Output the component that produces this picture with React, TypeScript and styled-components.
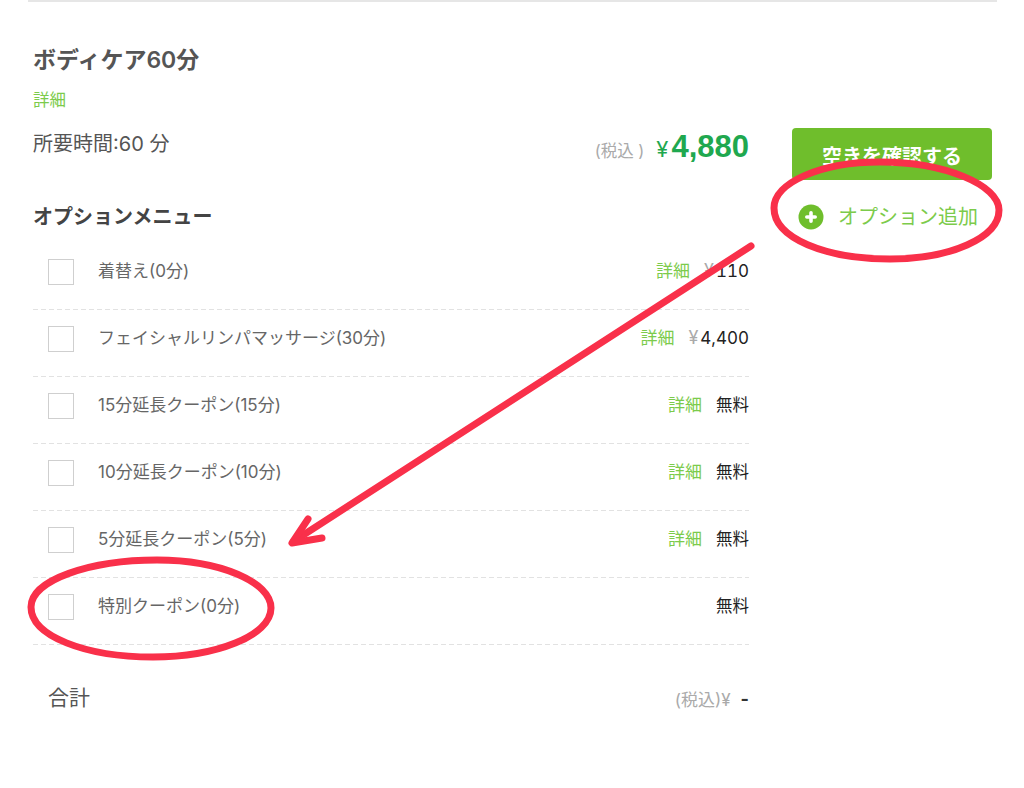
import React from "react";
import styled, { createGlobalStyle } from "styled-components";

const GlobalStyle = createGlobalStyle`
  html, body {
    margin: 0;
    padding: 0;
    background: #fff;
    font-family: "Inter", "Noto Sans CJK JP", sans-serif;
  }
`;

const Page = styled.div`
  position: relative;
  width: 1024px;
  height: 788px;
  overflow: hidden;
  background: #fff;
`;

const TopRule = styled.div`
  height: 2px;
  margin: 0 27px 0 28px;
  background: #e6e6e6;
`;

const Content = styled.div`
  display: flex;
  gap: 43px;
  padding: 43px 0 0 33px;
`;

const MainColumn = styled.div`
  width: 716px;
`;

const SideColumn = styled.div`
  width: 200px;
  padding-top: 83px;
`;

const Title = styled.h2`
  margin: 0;
  font-size: 23px;
  line-height: 30px;
  font-weight: 600;
  color: #555;
`;

const DetailLink = styled.a<{ $size?: number }>`
  color: #7ccb4b;
  font-size: ${(p) => p.$size ?? 17}px;
  text-decoration: none;
  cursor: pointer;
`;

const DetailRow = styled.div`
  margin-top: 13px;
  line-height: 24px;
`;

const SummaryRow = styled.div`
  display: flex;
  justify-content: space-between;
  align-items: flex-start;
  margin-top: 18px;
`;

const Duration = styled.div`
  font-size: 20px;
  line-height: 28px;
  color: #555;
`;

const PriceBlock = styled.div`
  display: flex;
  align-items: baseline;
  line-height: 34px;
`;

const TaxNote = styled.span`
  font-size: 16.5px;
  color: #aaa;
  margin-right: 12px;
`;

const Yen = styled.span<{ $size?: number; $color?: string }>`
  font-size: ${(p) => p.$size ?? 18}px;
  color: ${(p) => p.$color ?? "#aaa"};
`;

const MainPrice = styled.span`
  margin-left: 3px;
  font-family: "Liberation Sans", sans-serif;
  font-size: 31px;
  font-weight: 700;
  color: #1fa84f;
`;

const SectionTitle = styled.h3`
  margin: 35px 0 0;
  font-size: 20px;
  line-height: 28px;
  font-weight: 700;
  color: #444;
`;

const OptionList = styled.ul`
  list-style: none;
  margin: 12px 0 0;
  padding: 0;
`;

const OptionRow = styled.li`
  display: flex;
  align-items: flex-start;
  height: 67px;
  box-sizing: border-box;
  padding: 16px 0 0 15px;
  background: repeating-linear-gradient(90deg, #e2e2e2 0 5px, transparent 5px 8px) left bottom / 100% 1px no-repeat;
`;

const Checkbox = styled.span`
  flex: none;
  width: 26px;
  height: 26px;
  box-sizing: border-box;
  border: 1.5px solid #cfcfcf;
  background: #fff;
`;

const OptionName = styled.span`
  flex: 1;
  margin-left: 24px;
  font-size: 17px;
  line-height: 24px;
  color: #666;
`;

const OptionMeta = styled.span`
  display: flex;
  align-items: center;
  gap: 14px;
  font-size: 16.5px;
  line-height: 24px;
  color: #222;
`;

const OptionPrice = styled.span`
  display: flex;
  align-items: baseline;
  gap: 2px;
  font-size: 17px;
  font-variant-numeric: tabular-nums;
`;

const TotalRow = styled.div`
  display: flex;
  justify-content: space-between;
  align-items: center;
  margin-top: 38px;
  padding-left: 15px;
`;

const TotalLabel = styled.span`
  font-size: 21px;
  line-height: 30px;
  color: #555;
`;

const TotalValue = styled.span`
  display: flex;
  align-items: center;
  gap: 10px;
  font-size: 17px;
  color: #aaa;
`;

const Dash = styled.span`
  font-size: 18px;
  font-weight: 700;
  color: #333;
`;

const CheckButton = styled.button`
  display: block;
  width: 200px;
  height: 52px;
  border: 0;
  border-radius: 4px;
  background: #6fbe2c;
  color: #fff;
  font-family: inherit;
  font-size: 20px;
  font-weight: 600;
  padding: 2px 0 0;
  cursor: pointer;
`;

const AddOption = styled.div`
  display: flex;
  align-items: center;
  gap: 14px;
  margin: 23px 0 0 6px;
  color: #7ccb4b;
  font-size: 20px;
  line-height: 28px;
`;

const Annotations = styled.svg`
  position: absolute;
  left: 0;
  top: 0;
  pointer-events: none;
`;

type Option = {
  name: string;
  price?: string;
  free?: boolean;
  noDetail?: boolean;
};

const options: Option[] = [
  { name: "着替え(0分)", price: "110" },
  { name: "フェイシャルリンパマッサージ(30分)", price: "4,400" },
  { name: "15分延長クーポン(15分)", free: true },
  { name: "10分延長クーポン(10分)", free: true },
  { name: "5分延長クーポン(5分)", free: true },
  { name: "特別クーポン(0分)", free: true, noDetail: true },
];

const App: React.FC = () => {
  return (
    <Page>
      <GlobalStyle />
      <TopRule />
      <Content>
        <MainColumn>
          <Title>ボディケア60分</Title>
          <DetailRow>
            <DetailLink $size={16.5}>詳細</DetailLink>
          </DetailRow>
          <SummaryRow>
            <Duration>所要時間:60 分</Duration>
            <PriceBlock>
              <TaxNote>(税込 )</TaxNote>
              <Yen $size={22} $color="#1fa84f">
                ¥
              </Yen>
              <MainPrice>4,880</MainPrice>
            </PriceBlock>
          </SummaryRow>
          <SectionTitle>オプションメニュー</SectionTitle>
          <OptionList>
            {options.map((option) => (
              <OptionRow key={option.name}>
                <Checkbox />
                <OptionName>{option.name}</OptionName>
                <OptionMeta>
                  {!option.noDetail && <DetailLink>詳細</DetailLink>}
                  {option.free ? (
                    <span>無料</span>
                  ) : (
                    <OptionPrice>
                      <Yen>¥</Yen>
                      {option.price}
                    </OptionPrice>
                  )}
                </OptionMeta>
              </OptionRow>
            ))}
          </OptionList>
          <TotalRow>
            <TotalLabel>合計</TotalLabel>
            <TotalValue>
              <span>(税込)¥</span>
              <Dash>-</Dash>
            </TotalValue>
          </TotalRow>
        </MainColumn>
        <SideColumn>
          <CheckButton>空きを確認する</CheckButton>
          <AddOption>
            <svg width="26" height="26" viewBox="0 0 26 26">
              <circle cx="13" cy="13" r="12.5" fill="#6fbe2c" />
              <path d="M13 8.8v8.4M8.8 13h8.4" stroke="#fff" strokeWidth="3.6" strokeLinecap="round" />
            </svg>
            オプション追加
          </AddOption>
        </SideColumn>
      </Content>
      <Annotations width="1024" height="788" viewBox="0 0 1024 788" fill="none">
        <g stroke="#f9304a" strokeWidth="7" strokeLinecap="round" strokeLinejoin="round">
          <path d="M880 162C945 162 999 185 999 210C999 238 950 259 890 259C825 259 774 238 774 208C774 183 820 162 880 162Z" />
          <path d="M157 560C220 560 271 582 271 608C271 636 215 657 153 657C85 657 31 636 31 607C31 580 90 560 157 560Z" />
          <path d="M751 246L294 541" />
          <path d="M308 519L292 543L322 538" />
        </g>
      </Annotations>
    </Page>
  );
};

export default App;
